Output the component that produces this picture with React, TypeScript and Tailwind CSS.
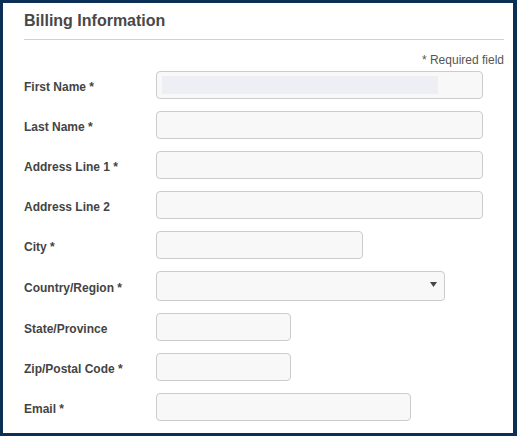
const fields = [
  { label: "First Name *", width: "w-[327px]", filled: true },
  { label: "Last Name *", width: "w-[327px]" },
  { label: "Address Line 1 *", width: "w-[327px]" },
  { label: "Address Line 2", width: "w-[327px]" },
  { label: "City *", width: "w-[207px]" },
  { label: "Country/Region *", width: "w-[289px]", select: true },
  { label: "State/Province", width: "w-[135px]" },
  { label: "Zip/Postal Code *", width: "w-[135px]" },
  { label: "Email *", width: "w-[255px]" },
];

export default function App() {
  return (
    <div className="w-[517px] h-[436px] bg-[#0c2f56] p-[3px] pr-[4px] font-['Liberation_Sans',Arial,sans-serif]">
      <div className="h-full bg-white pl-[21px] pr-[9px] pt-[8px]">
        <h2 className="text-[16px] font-bold leading-[20px] text-[#484848]">Billing Information</h2>
        <div className="mt-[8px] border-t border-[#d0d0d0]" />
        <div className="mt-[13px] flex justify-end text-[12px] leading-[14px] text-[#555]">* Required field</div>
        <div className="mt-[4px] flex flex-col gap-[12px]">
          {fields.map((field) => (
            <div key={field.label} className="flex items-center">
              <label className="mt-[3px] w-[132px] shrink-0 text-[12px] font-bold text-[#444]">{field.label}</label>
              <div
                className={`${field.width} ${field.select ? "h-[30px]" : "h-[28px]"} relative rounded-[4px] border border-[#cccccc] bg-[#f8f8f8]`}
              >
                {field.filled && (
                  <div className="absolute left-[5px] top-[4px] h-[18px] w-[276px] bg-[#eeeef5]" />
                )}
                {field.select && (
                  <svg className="absolute right-[7px] top-[10px]" width="7" height="5" viewBox="0 0 7 5">
                    <path d="M0 0H7L3.5 5Z" fill="#444" />
                  </svg>
                )}
              </div>
            </div>
          ))}
        </div>
      </div>
    </div>
  );
}
